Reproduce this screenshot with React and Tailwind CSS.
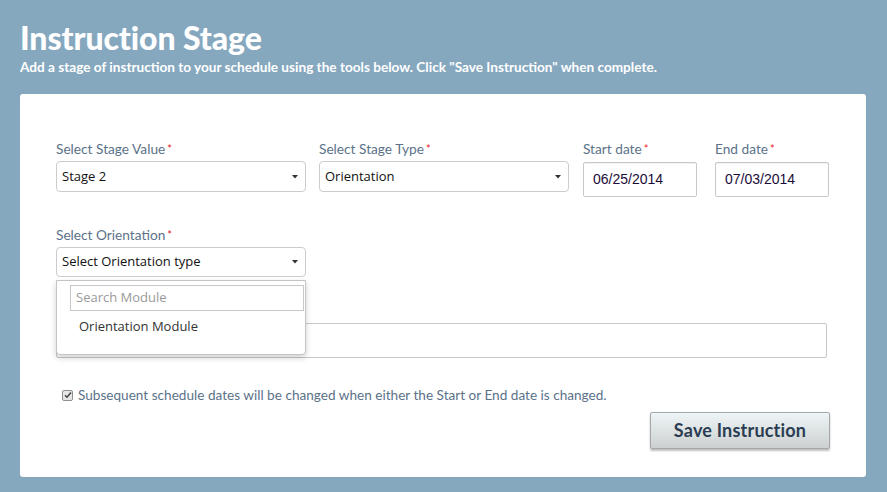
import React from "react";

function Label({ children }) {
  return (
    <div className="h-[18px] text-[13.7px] leading-[18px] text-[#5b7289] whitespace-nowrap font-['Lato',sans-serif]">
      {children}
      <span className="text-[#e5221b] text-[11px] align-top ml-[2px]">*</span>
    </div>
  );
}

function Caret() {
  return (
    <svg width="6" height="4" viewBox="0 0 6 4" className="shrink-0">
      <path d="M0 0 L6 0 L3 3.5 Z" fill="#333" />
    </svg>
  );
}

function Select({ value, h = "h-[31px]" }) {
  return (
    <div className={`mt-[3px] ${h} w-[250px] rounded-[4px] border border-[#cccccc] bg-white flex items-center justify-between pl-[5px] pr-[7px]`}>
      <span className="text-[13px] text-[#111] font-['Open_Sans',sans-serif]">{value}</span>
      <Caret />
    </div>
  );
}

function DateInput({ value }) {
  return (
    <div className="mt-[4px] h-[35px] w-[114px] border border-[#c8c8c8] rounded-[2px] bg-white flex items-center pl-[9px] shadow-[inset_0_1px_1px_rgba(0,0,0,0.06)]">
      <span className="text-[14px] text-[#1a0b3a] font-['Liberation_Sans',Arial,sans-serif]">{value}</span>
    </div>
  );
}

export default function App() {
  return (
    <div className="w-[887px] h-[492px] bg-[#86a8bf] overflow-hidden font-['Lato',sans-serif]">
      <div className="px-[20px] pt-[20px]">
        <h1 className="text-[32px] leading-[36px] font-black text-white tracking-[-0.1px]">Instruction Stage</h1>
        <p className="mt-[3px] text-[13.6px] leading-[16px] font-bold text-white whitespace-nowrap">
          Add a stage of instruction to your schedule using the tools below. Click "Save Instruction" when complete.
        </p>
      </div>
      <div className="mx-[20px] mt-[19px] h-[383px] w-[846px] bg-white rounded-[3px] pl-[36px] pr-[36px] pt-[46px] flex flex-col">
        <div className="flex items-start">
          <div className="w-[250px]">
            <Label>Select Stage Value</Label>
            <Select value="Stage 2" />
          </div>
          <div className="w-[250px] ml-[13px]">
            <Label>Select Stage Type</Label>
            <Select value="Orientation" />
          </div>
          <div className="w-[114px] ml-[14px]">
            <Label>Start date</Label>
            <DateInput value="06/25/2014" />
          </div>
          <div className="w-[114px] ml-[18px]">
            <Label>End date</Label>
            <DateInput value="07/03/2014" />
          </div>
        </div>

        <div className="mt-[29px] relative w-[250px]">
          <Label>Select Orientation</Label>
          <Select value="Select Orientation type" h="h-[30px]" />
          <div className="absolute z-10 left-0 top-[54px] w-[250px] h-[75px] bg-white border border-[#c4c4c4] rounded-b-[4px] shadow-[0_3px_6px_rgba(0,0,0,0.18)] pl-[13px] pr-[1px] pt-[4px]">
            <div className="h-[26px] w-[234px] border border-[#c8c8c8] flex items-center pl-[5px]">
              <span className="text-[13px] text-[#9a9a9a] font-['Open_Sans',sans-serif]">Search Module</span>
            </div>
            <div className="mt-[6px] pl-[9px] text-[13px] text-[#333] font-['Open_Sans',sans-serif]">Orientation Module</div>
          </div>
        </div>

        <div className="mt-[25px]">
          <div className="h-[18px]" />
          <div className="mt-[3px] h-[35px] w-[771px] border border-[#c8c8c8] rounded-[2px] bg-white" />
        </div>

        <div className="mt-[28px] h-[18px] flex items-center pl-[6px]">
          <span className="w-[11px] h-[11px] border border-[#8f8f8f] rounded-[2px] bg-[#e6e6e6] flex items-center justify-center">
            <svg width="8" height="8" viewBox="0 0 8 8">
              <path d="M1 4.2 L3 6.2 L7 1.5" stroke="#444" strokeWidth="1.5" fill="none" />
            </svg>
          </span>
          <span className="ml-[5px] text-[13.6px] leading-[18px] text-[#5b7289] whitespace-nowrap">
            Subsequent schedule dates will be changed when either the Start or End date is changed.
          </span>
        </div>

        <div className="mt-[8px] flex justify-end">
          <button className="h-[37px] w-[180px] rounded-[2px] border border-[#a5a8aa] bg-gradient-to-b from-[#eef5f6] to-[#cdd0d1] shadow-[0_2px_2px_rgba(0,0,0,0.25)] text-[18px] font-bold text-[#2b3d52] tracking-[0.2px]">
            Save Instruction
          </button>
        </div>
      </div>
    </div>
  );
}
